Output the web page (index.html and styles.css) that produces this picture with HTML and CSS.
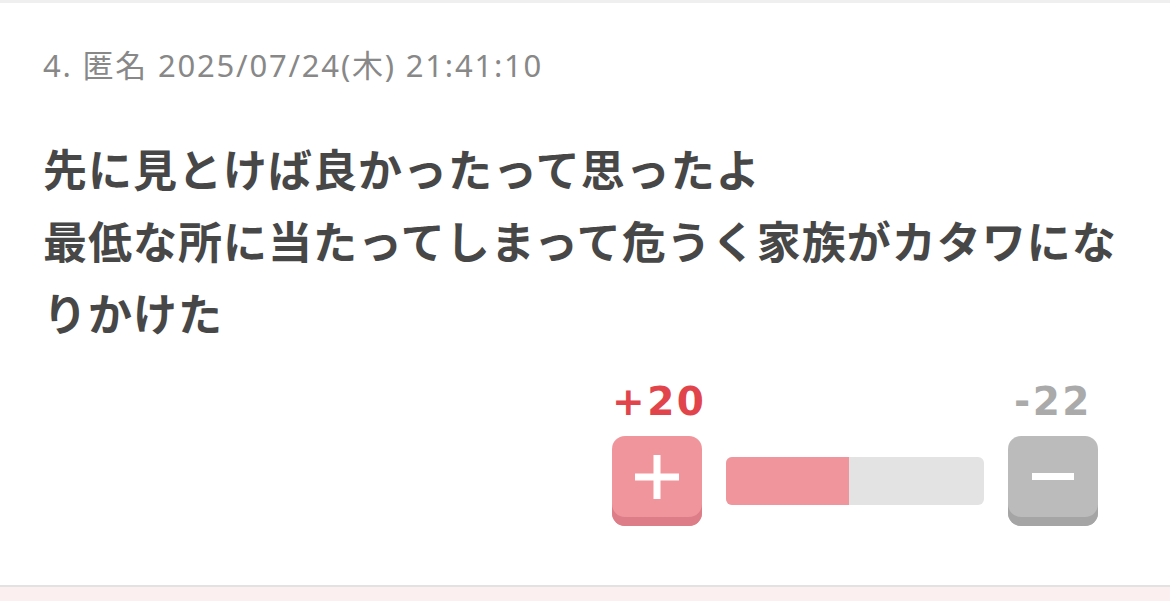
FILE: index.html
```html
<!DOCTYPE html>
<html lang="ja">
<head>
  <meta charset="UTF-8">
  <meta name="viewport" content="width=device-width, initial-scale=1.0">
  <title>コメント</title>
  <link rel="stylesheet" href="styles.css">
</head>
<body>
  <div class="comment">
    <div class="comment-head">4. 匿名 2025/07/24(木) 21:41:10</div>
    <div class="comment-body">先に見とけば良かったって思ったよ<br>最低な所に当たってしまって危うく家族がカタワになりかけた</div>

    <div class="vote">
      <div class="count plus-count">+20</div>
      <div></div>
      <div class="count minus-count">-22</div>

      <button class="vote-btn plus-btn" aria-label="プラス">
        <svg width="44" height="44" viewBox="0 0 44 44">
          <rect x="18.5" y="0" width="7" height="44" fill="#fff"/>
          <rect x="0" y="18.5" width="44" height="7" fill="#fff"/>
        </svg>
      </button>
      <div class="ratio">
        <div class="ratio-fill" style="width: 47.6%"></div>
      </div>
      <button class="vote-btn minus-btn" aria-label="マイナス">
        <svg width="42" height="7" viewBox="0 0 42 7">
          <rect x="0" y="0" width="42" height="7" fill="#fff"/>
        </svg>
      </button>
    </div>
  </div>
  <div class="next-comment"></div>
</body>
</html>
```

FILE: styles.css
```css
* {
  box-sizing: border-box;
  margin: 0;
  padding: 0;
}

body {
  background: #fff;
  font-family: 'Noto Sans CJK JP', 'Noto Sans', sans-serif;
}

.comment {
  background: #fff;
  border-top: 3px solid #efefef;
  border-bottom: 2px solid #e2e2e2;
  padding: 42px 43px 59px;
}

.comment-head {
  font-family: 'Noto Sans', 'Noto Sans CJK JP', sans-serif;
  font-size: 31px;
  line-height: 40px;
  letter-spacing: 1.8px;
  color: #888;
}

.comment-body {
  margin-top: 47px;
  font-size: 44px;
  line-height: 72px;
  letter-spacing: 1px;
  font-weight: bold;
  color: #474747;
}

.vote {
  margin-top: 34px;
  padding-right: 29px;
  display: grid;
  grid-template-columns: 90px 258px 90px;
  column-gap: 24px;
  row-gap: 14px;
  justify-content: end;
  align-items: center;
}

.count {
  font-family: 'DejaVu Sans', sans-serif;
  font-weight: bold;
  font-size: 39px;
  line-height: 40px;
  letter-spacing: 2.5px;
  text-align: center;
  white-space: nowrap;
}

.plus-count {
  color: #e2444b;
}

.minus-count {
  color: #aaa;
}

.vote-btn {
  width: 90px;
  height: 90px;
  border: none;
  border-radius: 13px;
  display: flex;
  align-items: center;
  justify-content: center;
  padding-bottom: 9px;
  cursor: pointer;
}

.plus-btn {
  background: #f0959c;
  box-shadow: inset 0 -9px 0 #dc7d87;
}

.minus-btn {
  background: #bbb;
  box-shadow: inset 0 -9px 0 #a5a5a5;
}

.ratio {
  height: 48px;
  background: #e3e3e3;
  border-radius: 6px;
  overflow: hidden;
}

.ratio-fill {
  height: 100%;
  background: #f0959c;
}

.next-comment {
  height: 20px;
  background: #fcefef;
}
```
